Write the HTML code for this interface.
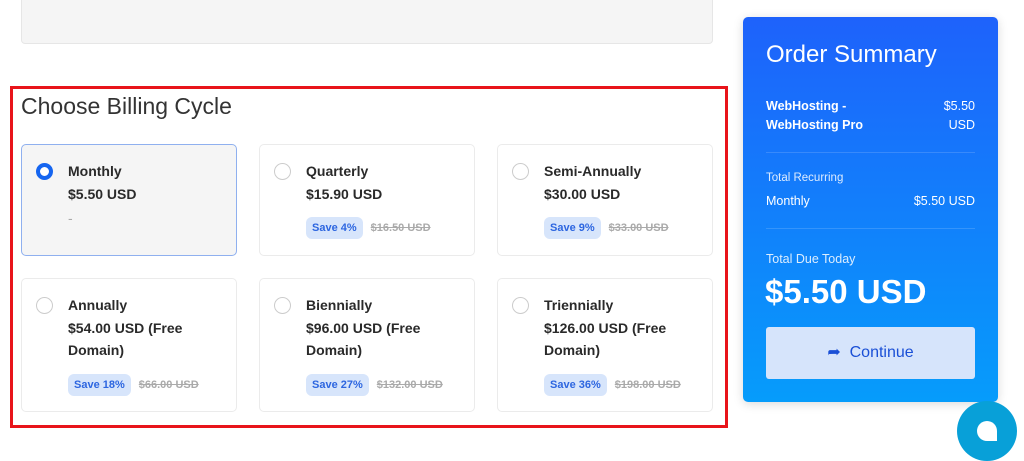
<!DOCTYPE html>
<html><head><style>
*{box-sizing:border-box;margin:0;padding:0}
body{width:1024px;height:461px;overflow:hidden;background:#fff;font-family:"Liberation Sans",sans-serif;color:#222;position:relative}
.abs{position:absolute}
.top{left:21px;top:-5px;width:692px;height:49px;background:#f5f5f5;border:1px solid #e6e6e6;border-radius:4px}
.red{left:10px;top:86px;width:718px;height:342px;border:3px solid #e8141a}
h2{position:absolute;left:21px;top:93px;font-size:23px;font-weight:300;color:#333}
.card{position:absolute;width:216px;border:1px solid #ebebeb;border-radius:5px;background:#fff}
.card.sel{background:#f5f5f5;border-color:#8fb0ef}
.radio{position:absolute;left:14px;top:18px;width:17px;height:17px;border-radius:50%;border:1.5px solid #ccc;background:#fff}
.sel .radio{border:4.5px solid #1565f0}
.t{position:absolute;left:46px;top:15px;font-size:14px;font-weight:bold;color:#2a2a2a;line-height:22.5px;width:165px}
.badge{display:inline-block;background:#d7e5fb;color:#2d66e0;font-size:11px;padding:0 6px;border-radius:6px;line-height:22px;font-weight:bold;margin-right:8px}
.old{color:#aaa;font-size:11px;text-decoration:line-through}
.side{left:743px;top:17px;width:255px;height:385px;border-radius:5px;background:linear-gradient(#1e62fb,#069cfb);color:#fff;box-shadow:0 2px 10px rgba(0,0,0,.15)}
.side .abs{font-size:12.5px}
</style></head><body>
<div class="abs top"></div>
<div class="abs red"></div>
<h2>Choose Billing Cycle</h2>

<div class="card sel" style="left:21px;top:144px;height:112px"><div class="radio"></div><div class="t">Monthly<br>$5.50 USD<div style="color:#aaa;font-weight:normal;margin-top:2px">-</div></div></div>
<div class="card" style="left:259px;top:144px;height:112px"><div class="radio"></div><div class="t">Quarterly<br>$15.90 USD<div style="margin-top:10px"><span class="badge">Save 4%</span><span class="old">$16.50 USD</span></div></div></div>
<div class="card" style="left:497px;top:144px;height:112px"><div class="radio"></div><div class="t">Semi-Annually<br>$30.00 USD<div style="margin-top:10px"><span class="badge">Save 9%</span><span class="old">$33.00 USD</span></div></div></div>

<div class="card" style="left:21px;top:278px;height:134px"><div class="radio"></div><div class="t">Annually<br>$54.00 USD (Free Domain)<div style="margin-top:10px"><span class="badge">Save 18%</span><span class="old">$66.00 USD</span></div></div></div>
<div class="card" style="left:259px;top:278px;height:134px"><div class="radio"></div><div class="t">Biennially<br>$96.00 USD (Free Domain)<div style="margin-top:10px"><span class="badge">Save 27%</span><span class="old">$132.00 USD</span></div></div></div>
<div class="card" style="left:497px;top:278px;height:134px"><div class="radio"></div><div class="t">Triennially<br>$126.00 USD (Free Domain)<div style="margin-top:10px"><span class="badge">Save 36%</span><span class="old">$198.00 USD</span></div></div></div>

<div class="abs side">
<div class="abs" style="left:23px;top:24px;font-size:24px!important;font-weight:300">Order Summary</div>
<div class="abs" style="left:23px;top:80px;font-weight:bold;line-height:19px">WebHosting -<br>WebHosting Pro</div>
<div class="abs" style="right:23px;top:80px;line-height:19px;text-align:right">$5.50<br>USD</div>
<div class="abs" style="left:23px;right:23px;top:135px;border-top:1px solid rgba(255,255,255,.15)"></div>
<div class="abs" style="left:23px;top:155px;font-size:11.5px!important;opacity:.85">Total Recurring</div>
<div class="abs" style="left:23px;top:177px">Monthly</div>
<div class="abs" style="right:23px;top:177px">$5.50 USD</div>
<div class="abs" style="left:23px;right:23px;top:211px;border-top:1px solid rgba(255,255,255,.15)"></div>
<div class="abs" style="left:23px;top:235px;opacity:.85">Total Due Today</div>
<div class="abs" style="left:22px;top:256px;font-size:33px!important;font-weight:bold">$5.50 USD</div>
<div class="abs" style="left:23px;top:310px;width:209px;height:52px;background:#d6e4fb;border-radius:3px;color:#1a4fd6;font-size:16px!important;text-align:center;line-height:52px">➦&nbsp; Continue</div>
</div>
<div class="abs" style="left:957px;top:401px;width:60px;height:60px;border-radius:50%;background:#08a0d8"></div>
<div class="abs" style="left:977px;top:421px;width:20px;height:20px;border-radius:50% 50% 0 50%;background:#fff"></div>
</body></html>
